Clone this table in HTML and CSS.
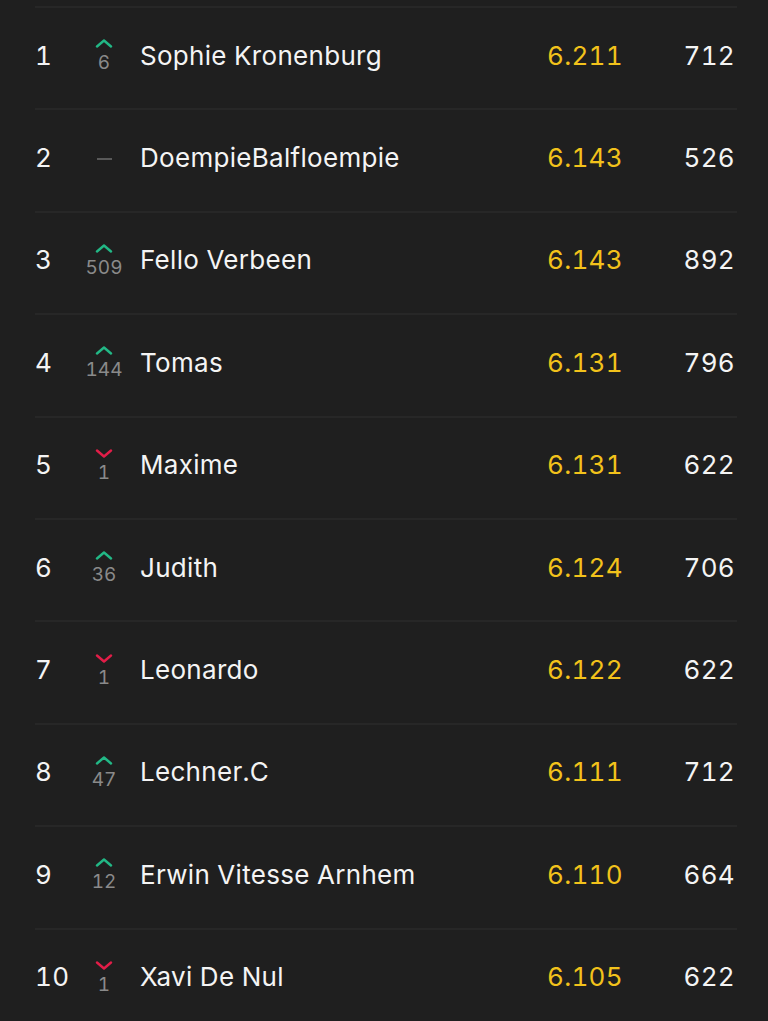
FILE: index.html
```html
<!DOCTYPE html>
<html lang="nl">
<head>
<meta charset="utf-8">
<link rel="stylesheet" href="styles.css">
<title>Ranglijst</title>
</head>
<body>
<ul class="board">
  <li class="row"><span class="rank">1</span><span class="chg up"><svg viewBox="0 0 18 9"><polyline points="2,7.5 9,1.5 16,7.5"/></svg><span class="n">6</span></span><span class="name">Sophie Kronenburg</span><span class="score">6.211</span><span class="pts">712</span></li>
  <li class="row"><span class="rank">2</span><span class="chg same"><span class="dash"></span></span><span class="name">DoempieBalfloempie</span><span class="score">6.143</span><span class="pts">526</span></li>
  <li class="row"><span class="rank">3</span><span class="chg up"><svg viewBox="0 0 18 9"><polyline points="2,7.5 9,1.5 16,7.5"/></svg><span class="n">509</span></span><span class="name">Fello Verbeen</span><span class="score">6.143</span><span class="pts">892</span></li>
  <li class="row"><span class="rank">4</span><span class="chg up"><svg viewBox="0 0 18 9"><polyline points="2,7.5 9,1.5 16,7.5"/></svg><span class="n">144</span></span><span class="name">Tomas</span><span class="score">6.131</span><span class="pts">796</span></li>
  <li class="row"><span class="rank">5</span><span class="chg down"><svg viewBox="0 0 18 9"><polyline points="2,1.5 9,7.5 16,1.5"/></svg><span class="n">1</span></span><span class="name">Maxime</span><span class="score">6.131</span><span class="pts">622</span></li>
  <li class="row"><span class="rank">6</span><span class="chg up"><svg viewBox="0 0 18 9"><polyline points="2,7.5 9,1.5 16,7.5"/></svg><span class="n">36</span></span><span class="name">Judith</span><span class="score">6.124</span><span class="pts">706</span></li>
  <li class="row"><span class="rank">7</span><span class="chg down"><svg viewBox="0 0 18 9"><polyline points="2,1.5 9,7.5 16,1.5"/></svg><span class="n">1</span></span><span class="name">Leonardo</span><span class="score">6.122</span><span class="pts">622</span></li>
  <li class="row"><span class="rank">8</span><span class="chg up"><svg viewBox="0 0 18 9"><polyline points="2,7.5 9,1.5 16,7.5"/></svg><span class="n">47</span></span><span class="name">Lechner.C</span><span class="score">6.111</span><span class="pts">712</span></li>
  <li class="row"><span class="rank">9</span><span class="chg up"><svg viewBox="0 0 18 9"><polyline points="2,7.5 9,1.5 16,7.5"/></svg><span class="n">12</span></span><span class="name">Erwin Vitesse Arnhem</span><span class="score">6.110</span><span class="pts">664</span></li>
  <li class="row"><span class="rank">10</span><span class="chg down"><svg viewBox="0 0 18 9"><polyline points="2,1.5 9,7.5 16,1.5"/></svg><span class="n">1</span></span><span class="name">Xavi De Nul</span><span class="score">6.105</span><span class="pts">622</span></li>
</ul>
</body>
</html>
```
FILE: styles.css
```css
html, body {
  margin: 0;
  padding: 0;
  background: #1f1f1f;
}
body {
  font-family: Inter, "Noto Sans", "Liberation Sans", sans-serif;
  color: #f4f4f4;
  overflow: hidden;
}
.board {
  list-style: none;
  margin: 0 31px 0 35px;
  padding: 6px 0 0 0;
}
.row {
  box-sizing: border-box;
  height: 102.4px;
  border-top: 2px solid #272727;
  display: grid;
  grid-template-columns: 48px 42px 1fr 80px 108px;
  align-items: center;
  padding: 0 2px 6px 0;
  font-size: 26px;
  letter-spacing: 0.3px;
  font-variant-numeric: tabular-nums;
}
.chg {
  display: flex;
  flex-direction: column;
  align-items: center;
  justify-content: center;
  margin-top: 2px;
}
.chg svg {
  width: 18px;
  height: 9px;
  fill: none;
  stroke-width: 2.4;
  stroke-linecap: round;
  stroke-linejoin: round;
}
.up svg { stroke: #22b886; }
.down svg { stroke: #e21d48; }
.chg .n {
  font-size: 19px;
  line-height: 20px;
  color: #8a8a8a;
  margin-top: 5px;
  letter-spacing: 0;
}
.dash {
  display: block;
  width: 15px;
  height: 2px;
  background: #595959;
}
.name {
  padding-left: 15px;
}
.score {
  color: #f2c21b;
}
.pts {
  text-align: right;
}
```
